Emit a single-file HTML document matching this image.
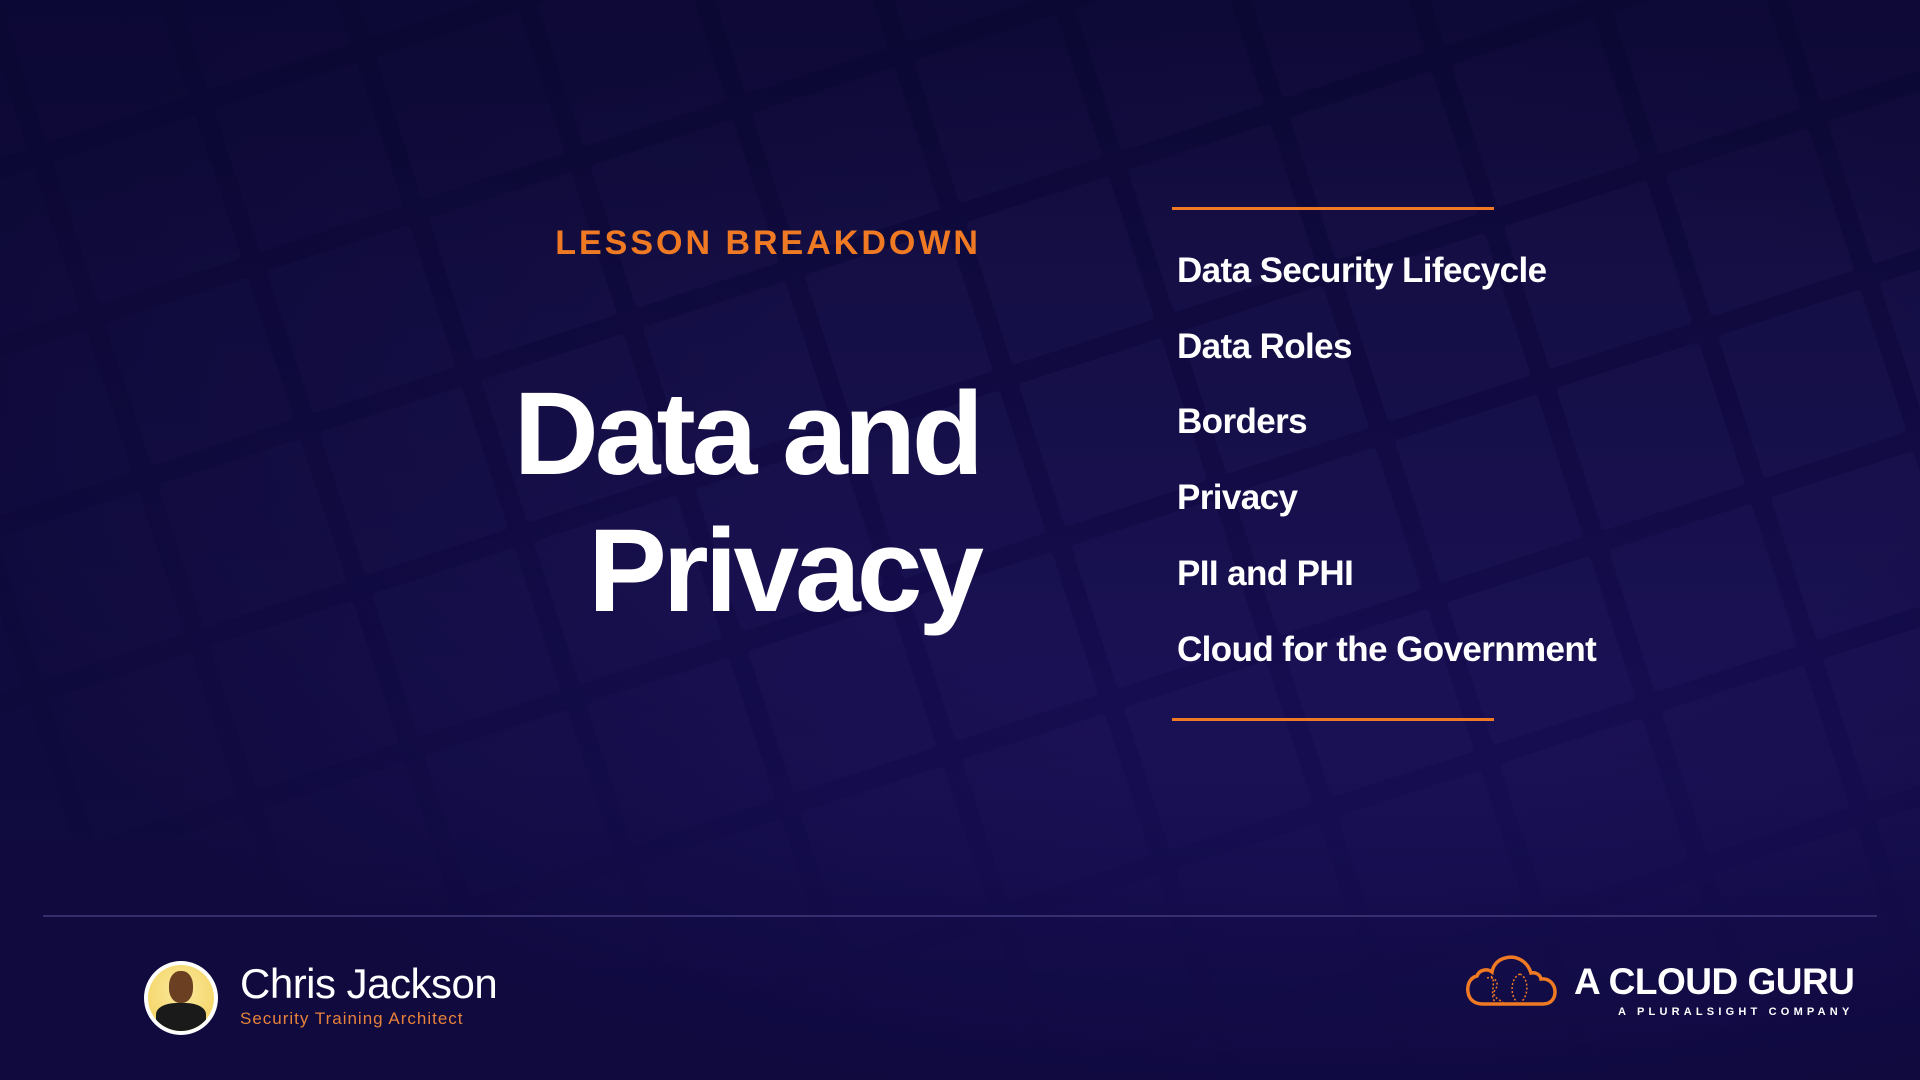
<!DOCTYPE html>
<html style="width:1920px;height:1080px;overflow:hidden;background:#0c0834"><head><meta charset="utf-8"><style>
*{margin:0;padding:0;box-sizing:border-box}
body{width:1920px;height:1080px;overflow:hidden;font-family:"Liberation Sans",sans-serif;
background:linear-gradient(180deg,#0c0834 0%,#120b45 45%,#170e55 75%,#1a0f5c 100%);position:relative}
.fade{position:absolute;left:0;top:0;width:1920px;height:1080px;background:radial-gradient(ellipse at 70% 40%,rgba(12,8,52,0) 30%,rgba(12,8,52,.7) 75%),linear-gradient(180deg,rgba(12,8,52,.6) 0%,rgba(12,8,52,0) 25%,rgba(20,12,80,0) 70%,rgba(24,14,88,.9) 90%)}
.abs{position:absolute}
.lb{right:939px;top:224px;color:#f07a24;font-weight:bold;font-size:34px;letter-spacing:3px;text-align:right}
.title{right:940px;top:366px;color:#fff;font-weight:bold;font-size:118px;letter-spacing:-4px;line-height:137px;text-align:right}
.hl{left:1172px;width:322px;height:3px;background:#f07a24}
.item{left:1177px;color:#fff;font-weight:bold;font-size:35px;letter-spacing:-0.6px;line-height:40px}
.div{left:43px;width:1834px;top:915px;height:2px;background:rgba(90,80,150,.5)}
</style></head><body>
<svg class="abs" style="left:0;top:0" width="1920" height="1080">
<defs><pattern id="p" width="170" height="170" patternUnits="userSpaceOnUse" patternTransform="rotate(-18)">
<rect x="0" y="0" width="150" height="150" rx="4" fill="#3a2f7a"/></pattern></defs>
<rect x="0" y="0" width="1920" height="1080" fill="url(#p)" opacity="0.13"/>
</svg>
<div class="fade"></div>
<div class="abs lb">LESSON BREAKDOWN</div>
<div class="abs title">Data and<br>Privacy</div>
<div class="abs hl" style="top:207px"></div>
<div class="abs hl" style="top:718px"></div>
<div class="abs item" style="top:251px">Data Security Lifecycle</div>
<div class="abs item" style="top:327px">Data Roles</div>
<div class="abs item" style="top:402px">Borders</div>
<div class="abs item" style="top:478px">Privacy</div>
<div class="abs item" style="top:554px">PII and PHI</div>
<div class="abs item" style="top:630px">Cloud for the Government</div>
<div class="abs div"></div>
<div class="abs" style="left:144px;top:961px;width:74px;height:74px;border-radius:50%;background:#fff;"></div>
<div class="abs" style="left:148px;top:965px;width:66px;height:66px;border-radius:50%;background:radial-gradient(circle at 50% 40%,#fbe9a0,#f2cf55);overflow:hidden">
<div style="position:absolute;left:21px;top:6px;width:24px;height:32px;border-radius:45%;background:#6b3f22"></div>
<div style="position:absolute;left:8px;top:38px;width:50px;height:28px;border-radius:40% 40% 0 0;background:#1a1a1a"></div>
</div>
<div class="abs" style="left:240px;top:960px;color:#fff;font-size:42px;letter-spacing:-0.5px">Chris Jackson</div>
<div class="abs" style="left:240px;top:1009px;color:#e8823a;font-size:17px;letter-spacing:1px">Security Training Architect</div>
<svg class="abs" style="left:1465px;top:952px" width="92" height="56" viewBox="0 0 92 56">
<path d="M18 52 H78 C88 52 90 44 90 40 C90 32 84 26 76 27 C75 22 70 20 66 21 C62 8 50 3 40 6 C32 8 28 14 27 20 C22 16 14 18 12 24 C4 26 2 34 3 40 C4 48 10 52 18 52 Z" fill="none" stroke="#f07a24" stroke-width="3.5"/>
<path d="M22 26 C28 24 36 30 30 38 C26 44 34 48 38 50 M26 24 C32 30 24 42 30 50" fill="none" stroke="#f07a24" stroke-width="1.5" stroke-dasharray="2 2"/>
<path d="M55 22 C45 26 45 44 52 50 M55 22 C64 26 64 44 56 50" fill="none" stroke="#f07a24" stroke-width="1.5" stroke-dasharray="2 2"/>
</svg>
<div class="abs" style="left:1574px;top:961px;color:#fff;font-weight:bold;font-size:37px;letter-spacing:-0.5px">A CLOUD GURU</div>
<div class="abs" style="left:1618px;top:1006px;color:#fff;font-weight:bold;font-size:11px;letter-spacing:4.2px">A PLURALSIGHT COMPANY</div>
</body></html>
